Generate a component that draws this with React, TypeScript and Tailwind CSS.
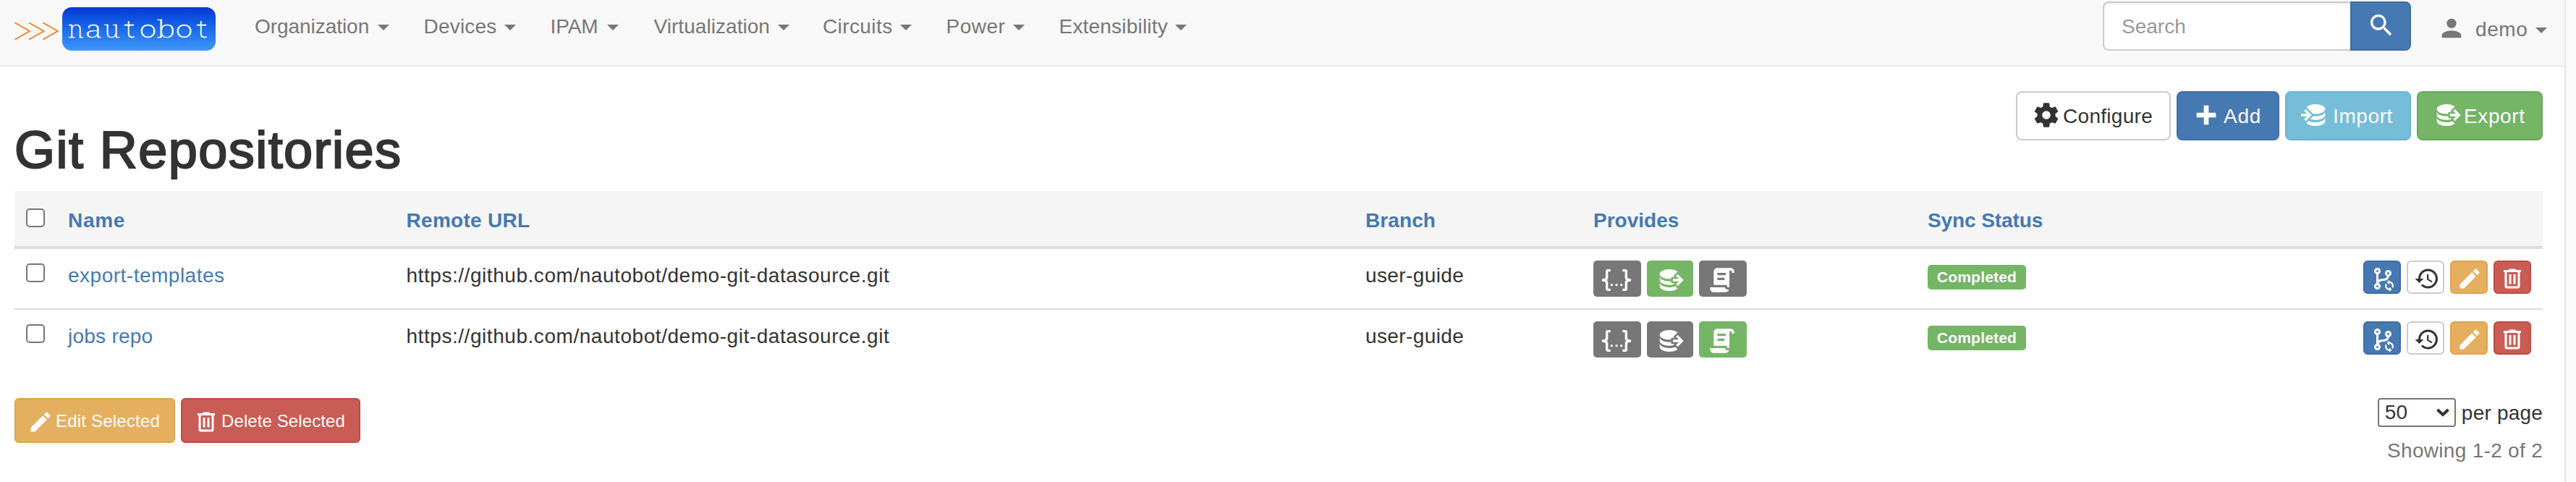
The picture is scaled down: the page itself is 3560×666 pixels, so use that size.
import type { ReactNode } from "react";

const ICONS = {
  cog: "M12,15.5A3.5,3.5 0 0,1 8.5,12A3.5,3.5 0 0,1 12,8.5A3.5,3.5 0 0,1 15.5,12A3.5,3.5 0 0,1 12,15.5M19.43,12.97C19.47,12.65 19.5,12.33 19.5,12C19.5,11.67 19.47,11.34 19.43,11L21.54,9.37C21.73,9.22 21.78,8.95 21.66,8.73L19.66,5.27C19.54,5.05 19.27,4.96 19.05,5.05L16.56,6.05C16.04,5.66 15.5,5.32 14.87,5.07L14.5,2.42C14.46,2.18 14.25,2 14,2H10C9.75,2 9.54,2.18 9.5,2.42L9.13,5.07C8.5,5.32 7.96,5.66 7.44,6.05L4.95,5.05C4.73,4.96 4.46,5.05 4.34,5.27L2.34,8.73C2.21,8.95 2.27,9.22 2.46,9.37L4.57,11C4.53,11.34 4.5,11.67 4.5,12C4.5,12.33 4.53,12.65 4.57,12.97L2.46,14.63C2.27,14.78 2.21,15.05 2.34,15.27L4.34,18.73C4.46,18.95 4.73,19.03 4.95,18.95L7.44,17.94C7.96,18.34 8.5,18.68 9.13,18.93L9.5,21.58C9.54,21.82 9.75,22 10,22H14C14.25,22 14.46,21.82 14.5,21.58L14.87,18.93C15.5,18.67 16.04,18.34 16.56,17.94L19.05,18.95C19.27,19.03 19.54,18.95 19.66,18.73L21.66,15.27C21.78,15.05 21.73,14.78 21.54,14.63L19.43,12.97Z",
  plus: "M20 14H14V20H10V14H4V10H10V4H14V10H20V14Z",
  dbImport:
    "M12,3C8.59,3 5.69,4.07 4.54,5.57L9.79,10.82C10.5,10.93 11.22,11 12,11C16.42,11 20,9.21 20,7C20,4.79 16.42,3 12,3M3.92,7.08L2.5,8.5L5,11H0V13H5L2.5,15.5L3.92,16.92L8.84,12M20,9C20,11.21 16.42,13 12,13C11.34,13 10.7,12.95 10.09,12.87L7.62,15.34C8.88,15.75 10.38,16 12,16C16.42,16 20,14.21 20,12M20,14C20,16.21 16.42,18 12,18C9.72,18 7.67,17.5 6.21,16.75L4.53,18.43C5.68,19.93 8.59,21 12,21C16.42,21 20,19.21 20,17",
  dbExport:
    "M12,3C7.58,3 4,4.79 4,7C4,9.21 7.58,11 12,11C12.5,11 13,10.97 13.5,10.92V9.5H16.39L15.39,8.5L18.9,5C17.5,3.8 14.94,3 12,3M18.92,7.08L17.5,8.5L20,11H15V13H20L17.5,15.5L18.92,16.92L23.84,12M4,9V12C4,14.21 7.58,16 12,16C13.17,16 14.26,15.85 15.25,15.63L16.38,14.5H13.5V12.92C13,12.97 12.5,13 12,13C7.58,13 4,11.21 4,9M4,14V17C4,19.21 7.58,21 12,21C14.94,21 17.5,20.2 18.9,19L17,17.1C15.61,17.66 13.9,18 12,18C7.58,18 4,16.21 4,14Z",
  pencil:
    "M20.71,7.04C21.1,6.65 21.1,6 20.71,5.63L18.37,3.29C18,2.9 17.35,2.9 16.96,3.29L15.12,5.12L18.87,8.87M3,17.25V21H6.75L17.81,9.93L14.06,6.18L3,17.25Z",
  trash:
    "M9,3V4H4V6H5V19A2,2 0 0,0 7,21H17A2,2 0 0,0 19,19V6H20V4H15V3H9M7,6H17V19H7V6M9,8V17H11V8H9M13,8V17H15V8H13Z",
  history:
    "M13.5,8H12V13L16.28,15.54L17,14.33L13.5,12.25V8M13,3A9,9 0 0,0 4,12H1L4.96,16.03L9,12H6A7,7 0 0,1 13,5A7,7 0 0,1 20,12A7,7 0 0,1 13,19C11.07,19 9.32,18.21 8.06,16.94L6.64,18.36C8.27,20 10.5,21 13,21A9,9 0 0,0 22,12A9,9 0 0,0 13,3",
  magnify:
    "M9.5,3A6.5,6.5 0 0,1 16,9.5C16,11.11 15.41,12.59 14.44,13.73L14.71,14H15.5L20.5,19L19,20.5L14,15.5V14.71L13.73,14.44C12.59,15.41 11.11,16 9.5,16A6.5,6.5 0 0,1 3,9.5A6.5,6.5 0 0,1 9.5,3M9.5,5C7,5 5,7 5,9.5C5,12 7,14 9.5,14C12,14 14,12 14,9.5C14,7 12,5 9.5,5Z",
  account:
    "M12,4A4,4 0 0,1 16,8A4,4 0 0,1 12,12A4,4 0 0,1 8,8A4,4 0 0,1 12,4M12,14C16.42,14 20,15.79 20,18V20H4V18C4,15.79 7.58,14 12,14Z",
  script:
    "M17.8,20C17.4,21.2 16.3,22 15,22H5C3.3,22 2,20.7 2,19V18H5L14.2,18C14.6,19.2 15.7,20 17,20H17.8M19,2C20.7,2 22,3.3 22,5V6H20V5C20,4.4 19.6,4 19,4C18.4,4 18,4.4 18,5V18H17C16.4,18 16,17.6 16,17V16H5V5C5,3.3 6.3,2 8,2H19M8,6V8H15V6H8M8,10V12H14V10H8Z",
  json: "M5,3H7V5H5V10A2,2 0 0,1 3,12A2,2 0 0,1 5,14V19H7V21H5C3.93,20.73 3,20.1 3,19V15A2,2 0 0,0 1,13H0V11H1A2,2 0 0,0 3,9V5A2,2 0 0,1 5,3M19,3A2,2 0 0,1 21,5V9A2,2 0 0,0 23,11H24V13H23A2,2 0 0,0 21,15V19A2,2 0 0,1 19,21H17V19H19V14A2,2 0 0,1 21,12A2,2 0 0,1 19,10V5H17V3H19M12,15A1,1 0 0,1 13,16A1,1 0 0,1 12,17A1,1 0 0,1 11,16A1,1 0 0,1 12,15M8,15A1,1 0 0,1 9,16A1,1 0 0,1 8,17A1,1 0 0,1 7,16A1,1 0 0,1 8,15M16,15A1,1 0 0,1 17,16A1,1 0 0,1 16,17A1,1 0 0,1 15,16A1,1 0 0,1 16,15Z",
  branch:
    "M13,14C9.64,14 8.54,15.35 8.18,16.24C9.25,16.7 10,17.76 10,19A3,3 0 0,1 7,22A3,3 0 0,1 4,19C4,17.69 4.83,16.58 6,16.17V7.83C4.83,7.42 4,6.31 4,5A3,3 0 0,1 7,2A3,3 0 0,1 10,5C10,6.31 9.17,7.42 8,7.83V13.12C8.88,12.47 10.16,12 12,12C14.67,12 15.56,10.66 15.85,9.77C14.77,9.32 14,8.25 14,7A3,3 0 0,1 17,4A3,3 0 0,1 20,7C20,8.34 19.12,9.5 17.91,9.86C17.65,11.29 16.68,14 13,14M7,18A1,1 0 0,0 6,19A1,1 0 0,0 7,20A1,1 0 0,0 8,19A1,1 0 0,0 7,18M7,4A1,1 0 0,0 6,5A1,1 0 0,0 7,6A1,1 0 0,0 8,5A1,1 0 0,0 7,4M17,6A1,1 0 0,0 16,7A1,1 0 0,0 17,8A1,1 0 0,0 18,7A1,1 0 0,0 17,6Z",
  sync: "M18 13V14.5C21.19 14.5 23.09 18.05 21.33 20.71L20.24 19.62C21.06 17.96 19.85 16 18 16V17.5L15.75 15.25L18 13M18 24V22.5C14.81 22.5 12.91 18.95 14.67 16.29L15.76 17.38C14.94 19.04 16.15 21 18 21V19.5L20.25 21.75L18 24Z",
};

function Icon({ d, className }: { d: string; className: string }) {
  return (
    <svg viewBox="0 0 24 24" fill="currentColor" className={`shrink-0 ${className}`} aria-hidden>
      <path d={d} />
    </svg>
  );
}

function Caret({ className = "" }: { className?: string }) {
  return (
    <svg viewBox="0 0 16 8" className={`h-2 w-4 shrink-0 ${className}`} fill="currentColor" aria-hidden>
      <path d="M0 0H16L8 8Z" />
    </svg>
  );
}

const NAV = [
  { label: "Organization", item: "w-[233.5px]", text: "w-[170px] tracking-[-0.05px]" },
  { label: "Devices", item: "w-[175px]", text: "w-[111px] tracking-[0.2px]" },
  { label: "IPAM", item: "w-[143px]", text: "w-[78px] tracking-[-0.1px]" },
  { label: "Virtualization", item: "w-[233.5px]", text: "w-[171px] tracking-[0.05px]" },
  { label: "Circuits", item: "w-[170.5px]", text: "w-[107px] tracking-[0.4px]" },
  { label: "Power", item: "w-[156px]", text: "w-[92.5px] tracking-[0.5px]" },
  { label: "Extensibility", item: "w-[180px]", text: "w-[160.5px] tracking-[0.2px]" },
];

const SLAB = "font-['Noto_Serif','Roboto_Serif',serif]";
const THIN_MONO = "font-['Roboto_Mono','Noto_Sans_Mono',monospace]";

const WORDMARK = [
  { c: "n", style: `${SLAB} scale-x-105` },
  { c: "a", style: `${SLAB} scale-x-[1.35]` },
  { c: "u", style: `${SLAB} scale-x-110` },
  { c: "t", style: `${THIN_MONO}` },
  { c: "o", style: `${THIN_MONO} scale-x-125` },
  { c: "b", style: `${SLAB} scale-x-[1.35]` },
  { c: "o", style: `${THIN_MONO} scale-x-125` },
  { c: "t", style: `${THIN_MONO}` },
];

function Logo() {
  return (
    <div className="flex h-[60px] items-center">
      <svg viewBox="0 0 62 60" className="h-[60px] w-[62px]" fill="none" stroke="#f08a35" strokeWidth="2" aria-hidden>
        <path d="M0.5 21.3L21 33L0.5 44.7M20 21.3L40.5 33L20 44.7M39.3 21.3L59.8 33L39.3 44.7" />
      </svg>
      <div className="ml-[3.5px] flex h-[60px] w-[212px] rounded-[13px] bg-linear-to-b from-[#0b34d6] to-[#3f98fb] pl-[6px] text-[33px] leading-[59px] font-extralight text-white [-webkit-text-stroke:0.3px_#fff]">
        {WORDMARK.map((l, i) => (
          <span key={i} className={`inline-block w-[25px] text-center ${l.style}`}>
            {l.c}
          </span>
        ))}
      </div>
    </div>
  );
}

function Navbar() {
  return (
    <nav className="flex h-[92px] items-start border-b-2 border-[#e7e7e7] bg-[#f8f8f8] pl-5 text-[#777]">
      <div className="w-[332px] pt-[10px]">
        <Logo />
      </div>
      <div className="flex pt-4">
        {NAV.map((n) => (
          <a key={n.label} className={`flex items-center ${n.item}`}>
            <span className={n.text}>{n.label}</span>
            <Caret className="mt-0.5" />
          </a>
        ))}
      </div>
      <div className="ml-auto flex items-start pt-0.5 pr-6">
        <div className="h-[68px] w-[342px] rounded-l-lg border-2 border-r-0 border-[#ccc] bg-white pt-3 pl-6 text-[#999] shadow-[inset_0_2px_2px_rgba(0,0,0,0.075)]">
          Search
        </div>
        <button className="flex h-[68px] w-[84px] rounded-r-lg border-2 border-[#3f6ea3] bg-[#4679b2] pt-[11px] pl-[21px] text-white">
          <Icon d={ICONS.magnify} className="size-10" />
        </button>
        <a className="ml-9 flex items-start">
          <Icon d={ICONS.account} className="mt-[17px] size-10" />
          <span className="mt-[18px] ml-[13px] w-[83px] tracking-[0.6px]">demo</span>
          <Caret className="mt-9" />
        </a>
      </div>
    </nav>
  );
}

function Button({ className, icon, children }: { className: string; icon: string; children: ReactNode }) {
  return (
    <button className={`flex h-[68px] items-center rounded-lg border-2 whitespace-nowrap ${className}`}>
      <Icon d={icon} className="-mt-0.5 size-10" />
      {children}
    </button>
  );
}

function Checkbox() {
  return <span className="mt-1 ml-4 block size-[26px] rounded-[5px] border-2 border-[#767676] bg-white" />;
}

const GRID = "grid grid-cols-[57px_467.5px_1325.5px_316px_462px_300px_1fr] items-start";

const ROWS = [
  { name: "export-templates", tracking: "tracking-[0.5px]", active: "export" },
  { name: "jobs repo", tracking: "tracking-[0.25px]", active: "script" },
];

const PROVIDES = [
  { key: "json", icon: ICONS.json, box: "w-[66px] pl-3" },
  { key: "export", icon: ICONS.dbExport, box: "w-16 pl-[11px]" },
  { key: "script", icon: ICONS.script, box: "w-[66px] pl-3" },
];

function ActionButton({ className, children }: { className: string; children: ReactNode }) {
  return (
    <button className={`flex h-[46px] w-[52px] rounded-md border-2 pt-[4.5px] ${className}`}>{children}</button>
  );
}

function RepoTable() {
  return (
    <div>
      <div className={`${GRID} h-20 border-b-4 border-[#ddd] bg-[#f5f5f5] pt-5 font-bold text-[#4679b2]`}>
        <Checkbox />
        <span className="pl-[17px] tracking-[0.7px]">Name</span>
        <span className="pl-[17px] tracking-[0.3px]">Remote URL</span>
        <span className="pl-[17px] tracking-[0.1px]">Branch</span>
        <span className="pl-4">Provides</span>
        <span className="pl-4 tracking-[-0.1px]">Sync Status</span>
      </div>
      {ROWS.map((r, i) => (
        <div key={r.name} className={`${GRID} pt-4 ${i === 0 ? "h-[82px]" : "h-[84px] border-t-2 border-[#ddd]"}`}>
          <Checkbox />
          <a className={`pl-[17px] text-[#4679b2] ${r.tracking}`}>{r.name}</a>
          <span className="pl-[17px] tracking-[0.55px]">https://github.com/nautobot/demo-git-datasource.git</span>
          <span className="pl-[17px] tracking-[0.4px]">user-guide</span>
          <div className="flex gap-2 pl-4 text-white">
            {PROVIDES.map((p) => (
              <span
                key={p.key}
                className={`flex h-[50px] items-start rounded-[5px] pt-[7px] ${p.box} ${
                  p.key === r.active ? "bg-[#74b566]" : "bg-[#777]"
                }`}
              >
                <Icon d={p.icon} className="size-10" />
              </span>
            ))}
          </div>
          <div className="pt-1.5 pl-4">
            <span className="flex h-[34px] w-[136px] items-center justify-center rounded-[5px] bg-[#74b566] text-[21px] font-bold tracking-[0.2px] text-white">
              Completed
            </span>
          </div>
          <div className="flex justify-end gap-2 pr-4">
            <ActionButton className="border-[#3f6ea3] bg-[#4679b2] pl-[6.5px] text-white">
              <svg viewBox="0 0 24 24" fill="currentColor" className="size-9 shrink-0" aria-hidden>
                <path d={ICONS.branch} />
                <path d={ICONS.sync} />
              </svg>
            </ActionButton>
            <ActionButton className="border-[#ccc] bg-white pl-[7.5px]">
              <Icon d={ICONS.history} className="size-9" />
            </ActionButton>
            <ActionButton className="border-[#e2a24a] bg-[#e5af60] pl-[6.5px] text-white">
              <Icon d={ICONS.pencil} className="size-9" />
            </ActionButton>
            <ActionButton className="border-[#c04a42] bg-[#c95c54] pl-1.5 text-white">
              <Icon d={ICONS.trash} className="size-9" />
            </ActionButton>
          </div>
        </div>
      ))}
    </div>
  );
}

export default function App() {
  return (
    <div className="flex h-[666px] w-[3560px] overflow-hidden bg-[#fafafa] font-['Liberation_Sans',Arial,sans-serif] text-[28px] leading-[42px] text-[#333]">
      <main className="w-[3546px] border-r-2 border-[#e7e7e7] bg-white">
        <Navbar />
        <div className="pr-[30px] pl-5">
          <header className="flex h-[172px] items-start justify-between">
            <h1 className="mt-[75px] text-[72px] leading-[80px] font-normal tracking-[1.45px] [-webkit-text-stroke:2.2px_#333]">
              Git Repositories
            </h1>
            <div className="mt-[34px] flex gap-2">
              <Button className="w-[214px] border-[#ccc] bg-white pl-5" icon={ICONS.cog}>
                <span className="mt-0.5 ml-[3px] tracking-[0.3px]">Configure</span>
              </Button>
              <Button className="w-[142px] border-[#3f6ea3] bg-[#4679b2] pl-[19px] text-white" icon={ICONS.plus}>
                <span className="mt-0.5 ml-[4px] tracking-[0.8px]">Add</span>
              </Button>
              <Button className="w-[174px] border-[#67b4d4] bg-[#76bdd9] pl-5 text-white" icon={ICONS.dbImport}>
                <span className="mt-0.5 ml-[4px] tracking-[0.6px]">Import</span>
              </Button>
              <Button className="w-[174px] border-[#66a957] bg-[#74b566] pl-[19px] text-white" icon={ICONS.dbExport}>
                <span className="mt-0.5 ml-[4px] tracking-[0.6px]">Export</span>
              </Button>
            </div>
          </header>
          <RepoTable />
          <footer className="flex items-start justify-between pt-10">
            <div className="flex gap-2 text-2xl text-white">
              <button className="flex h-[62px] w-[222px] items-center rounded-md border-2 border-[#e2a24a] bg-[#e5af60] pl-4 whitespace-nowrap">
                <Icon d={ICONS.pencil} className="mt-[3px] size-9" />
                <span className="mt-0.5 ml-[3px] tracking-[0.2px]">Edit Selected</span>
              </button>
              <button className="flex h-[62px] w-[248px] items-center rounded-md border-2 border-[#c04a42] bg-[#c95c54] pl-[15px] whitespace-nowrap">
                <Icon d={ICONS.trash} className="mt-[3px] size-9" />
                <span className="mt-0.5 ml-[3px] tracking-[0.1px]">Delete Selected</span>
              </button>
            </div>
            <div className="flex flex-col items-end gap-2.5">
              <div className="flex items-start gap-2">
                <span className="flex h-10 w-[108px] items-center justify-between rounded-[4px] border-2 border-[#767676] bg-white pr-[7px] pl-2">
                  50
                  <svg viewBox="0 0 18 12" className="h-3 w-[18px]" fill="none" stroke="#333" strokeWidth="4" aria-hidden>
                    <path d="M1.5 2L9 9L16.5 2" />
                  </svg>
                </span>
                <span className="tracking-[0.2px]">per page</span>
              </div>
              <span className="tracking-[0.3px] text-[#777]">Showing 1-2 of 2</span>
            </div>
          </footer>
        </div>
      </main>
    </div>
  );
}
